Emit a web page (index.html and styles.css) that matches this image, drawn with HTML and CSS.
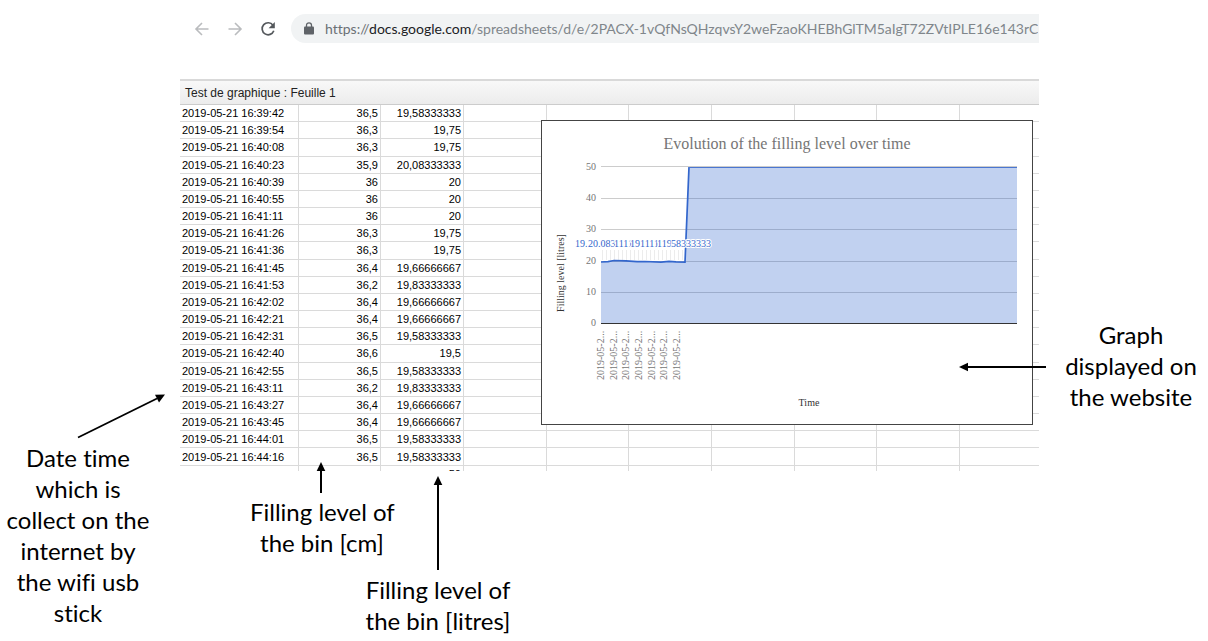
FILE: index.html
```html
<!DOCTYPE html>
<html lang="en">
<head>
<meta charset="utf-8">
<title>Filling level of the bin</title>
<link rel="stylesheet" href="styles.css">
</head>
<body>
<div class="figure">
  <p class="note note-date">Date time<br>which is<br>collect on the<br>internet by<br>the wifi usb<br>stick</p>

  <main class="center">
    <header class="toolbar">
      <button class="nav-button" type="button" aria-label="Back">
        <svg width="16" height="16" viewBox="0 0 16 16" fill="none" stroke="#babcbe" stroke-width="1.6"><path d="M14.5 8H2M8 2 2 8l6 6"/></svg>
      </button>
      <button class="nav-button" type="button" aria-label="Forward">
        <svg width="16" height="16" viewBox="0 0 16 16" fill="none" stroke="#babcbe" stroke-width="1.6"><path d="M1.500 8H14M8 2l6 6-6 6"/></svg>
      </button>
      <button class="nav-button" type="button" aria-label="Reload">
        <svg width="16" height="16" viewBox="0 0 16 16"><path d="M13 4.200A6 6 0 1 0 13.800 9.800" fill="none" stroke="#54585c" stroke-width="1.700"/><path d="M14.800 1v6.200H8.600z" fill="#54585c"/></svg>
      </button>
      <div class="address">
        <svg class="lock" width="10" height="13" viewBox="0 0 10 13"><rect y="4.500" width="10" height="8" rx="1" fill="#5f6368"/><path d="M2.500 5V3.300a2.500 2.500 0 0 1 5 0V5" fill="none" stroke="#5f6368" stroke-width="1.300"/></svg>
        <a class="url" href="#"><span class="scheme">https://</span><span class="domain">docs.google.com</span>/spreadsheets/d/e/2PACX-1vQfNsQHzqvsY2weFzaoKHEBhGlTM5aIgT72ZVtIPLE16e143rC</a>
      </div>
    </header>

    <h1 class="sheet-title">Test de graphique : Feuille 1</h1>
    <div class="sheet">
      <table class="cells">
        <colgroup><col class="col-date"><col class="col-a"><col class="col-b"><col class="col-b"><col class="col-a"><col class="col-b"><col class="col-b"><col class="col-a"><col class="col-b"><col></colgroup>
        <tbody>
          <tr><td>2019-05-21 16:39:42</td><td>36,5</td><td>19,58333333</td><td></td><td></td><td></td><td></td><td></td><td></td><td></td></tr>
          <tr><td>2019-05-21 16:39:54</td><td>36,3</td><td>19,75</td><td></td><td></td><td></td><td></td><td></td><td></td><td></td></tr>
          <tr><td>2019-05-21 16:40:08</td><td>36,3</td><td>19,75</td><td></td><td></td><td></td><td></td><td></td><td></td><td></td></tr>
          <tr><td>2019-05-21 16:40:23</td><td>35,9</td><td>20,08333333</td><td></td><td></td><td></td><td></td><td></td><td></td><td></td></tr>
          <tr><td>2019-05-21 16:40:39</td><td>36</td><td>20</td><td></td><td></td><td></td><td></td><td></td><td></td><td></td></tr>
          <tr><td>2019-05-21 16:40:55</td><td>36</td><td>20</td><td></td><td></td><td></td><td></td><td></td><td></td><td></td></tr>
          <tr><td>2019-05-21 16:41:11</td><td>36</td><td>20</td><td></td><td></td><td></td><td></td><td></td><td></td><td></td></tr>
          <tr><td>2019-05-21 16:41:26</td><td>36,3</td><td>19,75</td><td></td><td></td><td></td><td></td><td></td><td></td><td></td></tr>
          <tr><td>2019-05-21 16:41:36</td><td>36,3</td><td>19,75</td><td></td><td></td><td></td><td></td><td></td><td></td><td></td></tr>
          <tr><td>2019-05-21 16:41:45</td><td>36,4</td><td>19,66666667</td><td></td><td></td><td></td><td></td><td></td><td></td><td></td></tr>
          <tr><td>2019-05-21 16:41:53</td><td>36,2</td><td>19,83333333</td><td></td><td></td><td></td><td></td><td></td><td></td><td></td></tr>
          <tr><td>2019-05-21 16:42:02</td><td>36,4</td><td>19,66666667</td><td></td><td></td><td></td><td></td><td></td><td></td><td></td></tr>
          <tr><td>2019-05-21 16:42:21</td><td>36,4</td><td>19,66666667</td><td></td><td></td><td></td><td></td><td></td><td></td><td></td></tr>
          <tr><td>2019-05-21 16:42:31</td><td>36,5</td><td>19,58333333</td><td></td><td></td><td></td><td></td><td></td><td></td><td></td></tr>
          <tr><td>2019-05-21 16:42:40</td><td>36,6</td><td>19,5</td><td></td><td></td><td></td><td></td><td></td><td></td><td></td></tr>
          <tr><td>2019-05-21 16:42:55</td><td>36,5</td><td>19,58333333</td><td></td><td></td><td></td><td></td><td></td><td></td><td></td></tr>
          <tr><td>2019-05-21 16:43:11</td><td>36,2</td><td>19,83333333</td><td></td><td></td><td></td><td></td><td></td><td></td><td></td></tr>
          <tr><td>2019-05-21 16:43:27</td><td>36,4</td><td>19,66666667</td><td></td><td></td><td></td><td></td><td></td><td></td><td></td></tr>
          <tr><td>2019-05-21 16:43:45</td><td>36,4</td><td>19,66666667</td><td></td><td></td><td></td><td></td><td></td><td></td><td></td></tr>
          <tr><td>2019-05-21 16:44:01</td><td>36,5</td><td>19,58333333</td><td></td><td></td><td></td><td></td><td></td><td></td><td></td></tr>
          <tr><td>2019-05-21 16:44:16</td><td>36,5</td><td>19,58333333</td><td></td><td></td><td></td><td></td><td></td><td></td><td></td></tr>
          <tr><td></td><td></td><td>50</td><td></td><td></td><td></td><td></td><td></td><td></td><td></td></tr>
        </tbody>
      </table>

      <svg class="chart" width="492" height="305" viewBox="0 0 492 305">
        <rect x="0.500" y="0.500" width="491" height="304" fill="#fff" stroke="#444"/>
        <text class="chart-title" x="246" y="29" text-anchor="middle">Evolution of the filling level over time</text>
        <path d="M60 46.500H476M60 78.500H476M60 109.500H476M60 141.500H476M60 172.500H476" stroke="#ccc"/>
        <path d="M61.500 130v10M65.500 130v10M69.500 130v10M73.500 130v10M77.500 130v10M81.500 130v10M85.500 130v10M89.500 130v10M93.500 130v10M97.500 130v10M101.500 130v10M105.500 130v10M109.500 130v10M113.500 130v10M117.500 130v10M121.500 130v10M125.500 130v10M129.500 130v10M133.500 130v10M137.500 130v10M141.500 130v10" stroke="#ececec"/>
        <path d="M60 203V142l7-.3 6-1.200 12 .4 11 .8 8-.2 16 .7 8-.9 7 .5 9 .3 4-95H476V203z" fill="#3366cc" fill-opacity=".3"/>
        <path d="M60 142l7-.3 6-1.200 12 .4 11 .8 8-.2 16 .7 8-.9 7 .5 9 .3 4-95" fill="none" stroke="#3366cc" stroke-width="1.700"/>
        <path d="M148 47.500H476" stroke="#4a76d0"/>
        <path d="M60 203.500H476" stroke="#333"/>
        <g class="axis" text-anchor="end">
          <text x="55" y="50">50</text><text x="55" y="81">40</text><text x="55" y="112">30</text><text x="55" y="144">20</text><text x="55" y="175">10</text><text x="55" y="206">0</text>
        </g>
        <g class="values"><text x="34" y="127">19.</text><text x="47" y="127">20.083</text><text x="73" y="127">1111</text><text x="89" y="127">19</text><text x="99" y="127">1111</text><text x="116" y="127">119</text><text x="130" y="127">58333333</text></g>
        <g class="axis">
          <text transform="translate(63 260) rotate(-90)">2019-05-2...</text>
          <text transform="translate(76 260) rotate(-90)">2019-05-2...</text>
          <text transform="translate(88 260) rotate(-90)">2019-05-2...</text>
          <text transform="translate(101 260) rotate(-90)">2019-05-2...</text>
          <text transform="translate(114 260) rotate(-90)">2019-05-2...</text>
          <text transform="translate(126 260) rotate(-90)">2019-05-2...</text>
          <text transform="translate(139 260) rotate(-90)">2019-05-2...</text>
        </g>
        <text class="axis-name" text-anchor="middle" transform="translate(23 153) rotate(-90)">Filling level [litres]</text>
        <text class="axis-name" text-anchor="middle" x="268" y="286">Time</text>
      </svg>
    </div>

    <p class="note note-cm">Filling level of<br>the bin [cm]</p>
    <p class="note note-litres">Filling level of<br>the bin [litres]</p>
  </main>

  <p class="note note-graph">Graph<br>displayed on<br>the website</p>

  <svg class="arrow arrow-date" width="90" height="46" viewBox="0 0 90 46"><path d="M1 44.500 80 5.500" stroke="#000" stroke-width="1.800"/><path d="M88 1.500 82 9.500 78 1.800z"/></svg>
  <svg class="arrow arrow-cm" width="10" height="31" viewBox="0 0 10 31"><path d="M5 31V6" stroke="#000" stroke-width="2"/><path d="M5 0l4.300 9H.7z"/></svg>
  <svg class="arrow arrow-litres" width="10" height="94" viewBox="0 0 10 94"><path d="M5 94V6" stroke="#000" stroke-width="2"/><path d="M5 0l4.300 9H.7z"/></svg>
  <svg class="arrow arrow-graph" width="87" height="10" viewBox="0 0 87 10"><path d="M87 5H6" stroke="#000" stroke-width="2"/><path d="M0 5l9-4.300v8.600z"/></svg>
</div>
</body>
</html>
```
FILE: styles.css
```css
* { box-sizing: border-box; }

body {
  margin: 0;
  background: #fff;
  color: #000;
  font-family: "Liberation Sans", Arial, sans-serif;
}

.figure {
  position: relative;
  display: grid;
  grid-template-columns: 180px minmax(0, 1fr) 169px;
  align-items: start;
}

/* Browser bar */
.toolbar {
  display: flex;
  align-items: center;
  gap: 17px;
  margin: 14px 0 36px;
  padding-left: 14px;
}

.nav-button {
  display: flex;
  padding: 0;
  border: 0;
  background: none;
}

.address {
  display: flex;
  flex: 1;
  align-items: center;
  gap: 11px;
  min-width: 0;
  height: 29px;
  margin-left: -2px;
  padding-left: 13px;
  border-radius: 15px 0 0 15px;
  background: #f1f3f4;
}

.lock { flex: none; }

.url {
  overflow: hidden;
  color: #80868b;
  font: 14px/29px Lato, "Noto Sans", sans-serif;
  font-variant-ligatures: none;
  text-decoration: none;
  white-space: nowrap;
}

.scheme { color: #6b7075; }
.domain { color: #202124; }

/* Spreadsheet */
.sheet-title {
  margin: 0;
  padding: 1px 5px 0;
  border-top: 2px solid #d9d9d9;
  border-bottom: 1px solid #ccc;
  background: linear-gradient(#f8f8f8, #ececec);
  color: #222;
  font-size: 12px;
  font-weight: 400;
  line-height: 22px;
}

.sheet {
  position: relative;
  height: 366px;
  overflow: hidden;
}

.cells {
  width: 100%;
  height: 378px;
  border-collapse: separate;
  border-spacing: 0;
  table-layout: fixed;
  font-size: 11px;
  line-height: 16px;
}

.col-date { width: 119px; }
.col-a { width: 82px; }
.col-b { width: 83px; }

.cells td {
  padding: 0 2px;
  border-right: 1px solid #dadada;
  border-bottom: 1px solid #dadada;
  text-align: right;
  white-space: nowrap;
}

.cells td:first-child { text-align: left; }
.cells td:last-child { border-right: 0; }

/* Chart laid over the cells */
.chart {
  position: absolute;
  top: 15px;
  left: 361px;
  font-family: "Liberation Serif", "Times New Roman", serif;
  font-size: 10px;
}

.chart-title { fill: #757575; font-size: 16px; }
.axis { fill: #757575; }
.axis-name { fill: #333; }

.values {
  fill: #3366cc;
  stroke: #fff;
  stroke-width: 2px;
  paint-order: stroke;
}

/* Annotations */
.note {
  margin: 0;
  font: 24px/31px Lato, Carlito, sans-serif;
  font-variant-ligatures: none;
  text-align: center;
  white-space: nowrap;
}

.note-date { width: 156px; padding-top: 442px; }
.note-cm { width: 144px; margin: 25px 0 0 70px; }
.note-litres { width: 148px; margin: 16px 0 0 184px; }
.note-graph { padding: 319px 0 0 15px; }

.arrow { position: absolute; }
.arrow-date { top: 393px; left: 77px; }
.arrow-cm { top: 462px; left: 316px; }
.arrow-litres { top: 476px; left: 433px; }
.arrow-graph { top: 362px; right: 162px; }
```
